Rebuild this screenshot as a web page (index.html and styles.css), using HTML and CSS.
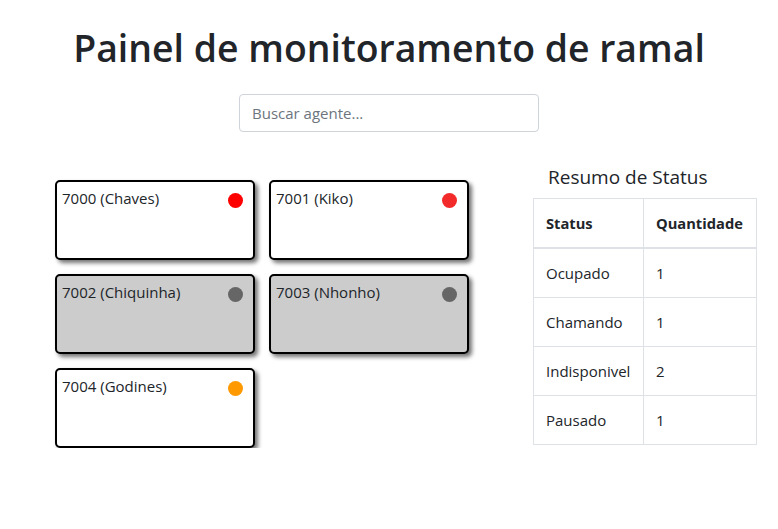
FILE: index.html
```html
<!DOCTYPE html>
<html lang="pt-BR">
<head>
<meta charset="utf-8">
<title>Painel de monitoramento de ramal</title>
<link rel="stylesheet" href="styles.css">
</head>
<body>
<h1 class="title">Painel de monitoramento de ramal</h1>
<div class="search-wrap">
  <input class="search" type="text" placeholder="Buscar agente...">
</div>
<div class="main">
  <div class="cards">
    <div class="card">
      <span class="name">7000 (Chaves)</span>
      <span class="dot dot-busy"></span>
    </div>
    <div class="card">
      <span class="name">7001 (Kiko)</span>
      <span class="dot dot-calling"></span>
    </div>
    <div class="card card-off">
      <span class="name">7002 (Chiquinha)</span>
      <span class="dot dot-off"></span>
    </div>
    <div class="card card-off">
      <span class="name">7003 (Nhonho)</span>
      <span class="dot dot-off"></span>
    </div>
    <div class="card">
      <span class="name">7004 (Godines)</span>
      <span class="dot dot-paused"></span>
    </div>
  </div>
  <div class="summary">
    <h2 class="summary-title">Resumo de Status</h2>
    <table class="table">
      <thead>
        <tr><th>Status</th><th>Quantidade</th></tr>
      </thead>
      <tbody>
        <tr><td>Ocupado</td><td>1</td></tr>
        <tr><td>Chamando</td><td>1</td></tr>
        <tr><td>Indisponivel</td><td>2</td></tr>
        <tr><td>Pausado</td><td>1</td></tr>
      </tbody>
    </table>
  </div>
</div>
</body>
</html>
```

FILE: styles.css
```css
* { box-sizing: border-box; }
body {
  margin: 0;
  font-family: "Open Sans", "Noto Sans", sans-serif;
  color: #212529;
  background: #fff;
}
.title {
  margin: 24px 0 0;
  text-align: center;
  font-size: 37.4px;
  font-weight: 600;
  line-height: 48px;
}
.search-wrap {
  display: flex;
  justify-content: center;
  margin-top: 22px;
}
.search {
  width: 300px;
  height: 38px;
  padding: 6px 12px;
  border: 1px solid #ced4da;
  border-radius: 4px;
  font-family: inherit;
  font-size: 15px;
  color: #495057;
}
.search::placeholder { color: #6c757d; }
.main {
  display: flex;
  align-items: flex-start;
  margin-top: 23px;
  padding-left: 55px;
}
.cards {
  display: grid;
  grid-template-columns: 200px 200px;
  gap: 14px;
  margin-top: 25px;
  width: 478px;
}
.card {
  height: 80px;
  border: 2px solid #000;
  border-radius: 5px;
  background: #fff;
  box-shadow: 3px 3px 4px rgba(0,0,0,0.55);
  display: flex;
  justify-content: space-between;
  align-items: flex-start;
  padding: 5px 10px 0 5px;
}
.card-off { background: #ccc; }
.name {
  font-size: 15px;
  line-height: 22px;
}
.dot {
  width: 15px;
  height: 15px;
  border-radius: 50%;
  margin-top: 6px;
}
.dot-busy { background: #ff0000; }
.dot-calling { background: #f22a2a; }
.dot-off { background: #666; }
.dot-paused { background: #ff9900; }
.summary { width: 224px; }
.summary-title {
  margin: 9px 0 8px 15px;
  font-size: 19px;
  font-weight: 500;
  line-height: 26px;
}
.table {
  width: 224px;
  border-collapse: collapse;
  font-size: 15px;
}
.table th, .table td {
  border: 1px solid #dee2e6;
  padding: 12px;
  height: 49px;
  text-align: left;
  line-height: 24px;
}
.table th {
  font-weight: 700;
  font-size: 14.7px;
  border-bottom: 2px solid #dee2e6;
}
.table th:first-child, .table td:first-child { width: 110px; }
```
